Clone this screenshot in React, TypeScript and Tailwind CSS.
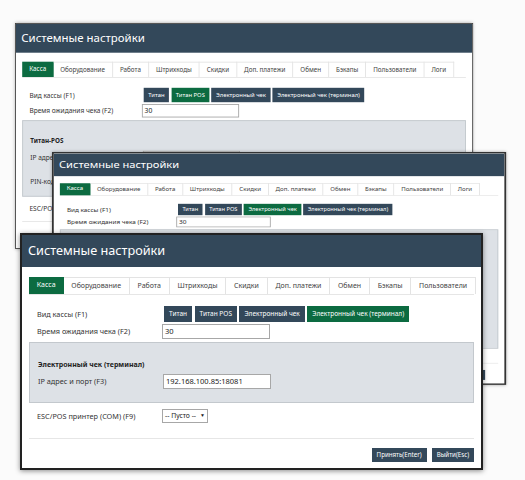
import React from "react";

const TABS = [
  "Касса",
  "Оборудование",
  "Работа",
  "Штрихкоды",
  "Скидки",
  "Доп. платежи",
  "Обмен",
  "Бэкапы",
  "Пользователи",
  "Логи",
];

const KINDS = ["Титан", "Титан POS", "Электронный чек", "Электронный чек (терминал)"];

const Row = ({
  label,
  children,
  className = "",
}: {
  label: string;
  children?: React.ReactNode;
  className?: string;
}) => (
  <div className={"flex items-center " + className}>
    <div className="w-[125px] shrink-0 whitespace-nowrap">{label}</div>
    {children}
  </div>
);

const Field = ({ value = "", className = "w-[108px]" }: { value?: string; className?: string }) => (
  <div className={"flex h-[15px] items-center border border-[#a7a7a7] bg-white px-[2px] text-[7.5px] text-[#222] " + className}>
    {value}
  </div>
);

type WindowProps = {
  tabs: string[];
  kind: number;
  panel: React.ReactNode;
  panelClass: string;
  footerClass: string;
  className: string;
};

const Window = ({ tabs, kind, panel, panelClass, footerClass, className }: WindowProps) => (
  <div className={"absolute flex flex-col overflow-hidden bg-white " + className}>
    {/* шапка */}
    <div className="flex h-[32px] shrink-0 items-center bg-[#33485a] pl-[6px] text-[12.7px] text-white">
      Системные настройки
    </div>

    <div className="px-[7px] pt-[10px]">
      {/* вкладки */}
      <div className="flex h-[18px] border-b border-[#e6e6e6] text-[7px]">
        {tabs.map((t, i) => (
          <div
            key={t}
            className={
              i === 0
                ? "flex items-center whitespace-nowrap bg-[#0c6b41] px-[7.8px] text-white"
                : "flex items-center whitespace-nowrap border-r border-t border-[#e3e3e3] px-[7.8px] text-[#444]"
            }
          >
            {t}
          </div>
        ))}
      </div>

      <div className="pl-[8px] pt-[11px]">
        <Row label="Вид кассы (F1)" className="h-[16px]">
          <div className="ml-[2px] flex h-[16px] gap-[2.5px] text-[6.5px]">
            {KINDS.map((k, i) => (
              <div
                key={k}
                className={
                  i === kind
                    ? "flex items-center whitespace-nowrap bg-[#0c6b41] px-[5px] text-white"
                    : "flex items-center whitespace-nowrap bg-[#33485a] px-[5px] text-white"
                }
              >
                {k}
              </div>
            ))}
          </div>
        </Row>
        <Row label="Время ожидания чека (F2)" className="mt-[2px]">
          <Field value="30" />
        </Row>
      </div>

      {/* панель выбранной кассы */}
      <div className={"mt-[3px] border border-[#c3c8cd] bg-[#dde1e6] pl-[8px] " + panelClass}>{panel}</div>

      <div className="pl-[8px] pt-[6px]">
        <Row label="ESC/POS принтер (COM) (F9)">
          <div className="flex h-[14px] items-center gap-[4px] whitespace-nowrap border border-[#a7a7a7] bg-white px-[2px] text-[6.8px] text-[#222]">
            -- Пусто --
            <span className="text-[5px]">▼</span>
          </div>
        </Row>
      </div>
    </div>

    {/* кнопки */}
    <div className={"mx-[7px] mt-auto flex justify-end gap-[5px] border-t border-[#e6e6e6] pb-[6px] pt-[9px] text-[6.2px] " + footerClass}>
      <div className="flex h-[14px] items-center whitespace-nowrap bg-[#33485a] px-[5px] text-white">Принять(Enter)</div>
      <div className="flex h-[14px] items-center whitespace-nowrap bg-[#33485a] px-[5px] text-white">Выйти(Esc)</div>
    </div>
  </div>
);

export default function App() {
  return (
    <div className="relative h-[480px] w-[525px] overflow-hidden bg-[#fbfbfb] font-['Noto_Sans',sans-serif] text-[7.3px] text-[#333]">
      <Window
        className="left-[15px] top-[23px] h-[251px] w-[509px] origin-top-left scale-[0.9] border border-[#444] shadow-[0_0_4px_rgba(0,0,0,0.35)]"
        tabs={TABS}
        kind={1}
        panelClass="pt-[17px] pb-[8px]"
        footerClass="pr-0"
        panel={
          <>
            <div className="flex h-[10px] items-center text-[7px] font-bold text-[#222]">Титан-POS</div>
            <Row label="IP адрес и порт (F3)" className="mt-[6px]">
              <Field value="192.168.0.10:5000" />
            </Row>
            <Row label="PIN-код" className="mt-[12px]">
              <Field />
            </Row>
          </>
        }
      />

      <Window
        className="left-[52px] top-[152px] h-[328px] w-[519px] origin-top-left scale-x-[0.875] scale-y-[0.71] border-2 border-[#333] shadow-[0_0_4px_rgba(0,0,0,0.35)]"
        tabs={TABS}
        kind={2}
        panelClass="h-[168px] pt-[17px]"
        footerClass="pr-[15px]"
        panel={
          <>
            <div className="flex h-[10px] items-center text-[7px] font-bold text-[#222]">Электронный чек</div>
            <Row label="Адрес сервера" className="mt-[6px]">
              <Field />
            </Row>
          </>
        }
      />

      <Window
        className="left-[20px] top-[233px] h-[237px] w-[463px] border-2 border-[#222] shadow-[0_1px_5px_rgba(0,0,0,0.45)]"
        tabs={TABS.slice(0, 9)}
        kind={3}
        panelClass="pt-[17px] pb-[13px]"
        footerClass="pr-0"
        panel={
          <>
            <div className="flex h-[10px] items-center text-[7px] font-bold text-[#222]">Электронный чек (терминал)</div>
            <Row label="IP адрес и порт (F3)" className="mt-[4px]">
              <Field value="192.168.100.85:18081" />
            </Row>
          </>
        }
      />
    </div>
  );
}
